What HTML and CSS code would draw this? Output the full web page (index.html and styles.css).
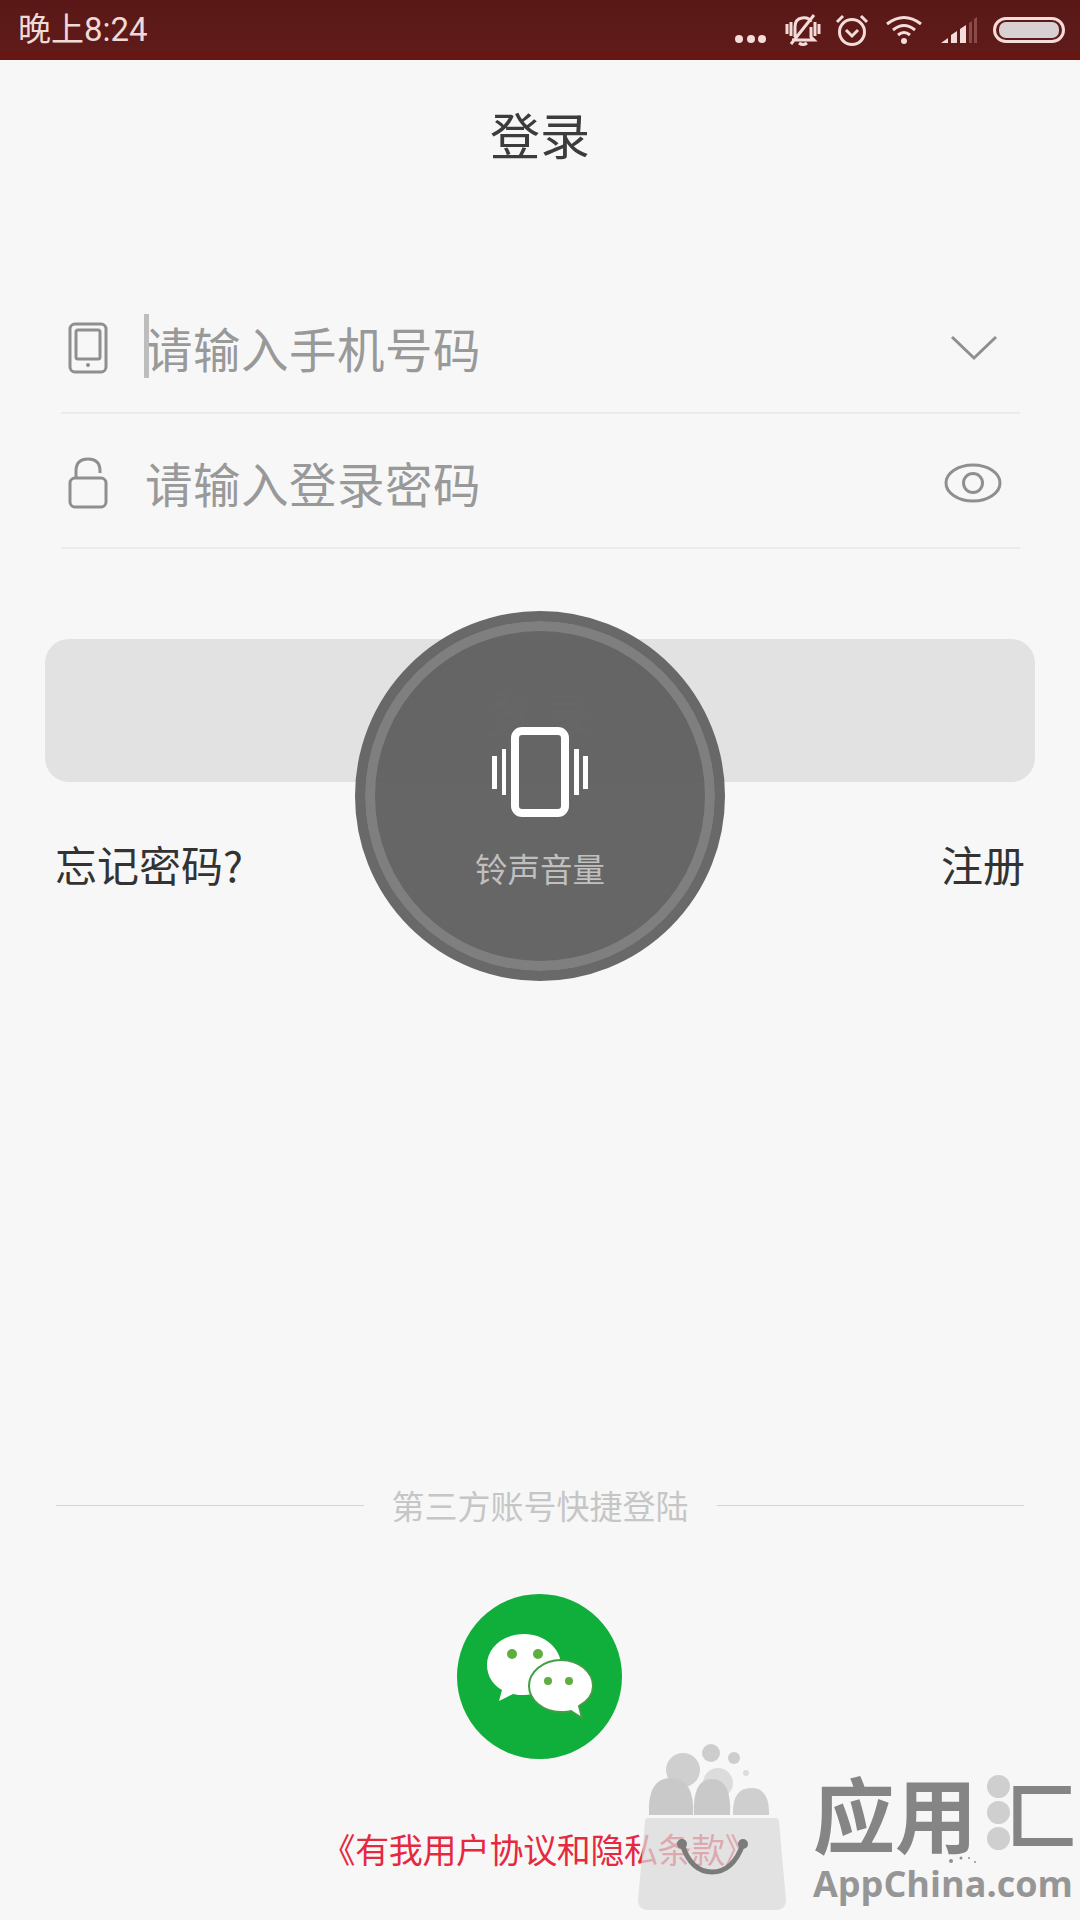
FILE: index.html
```html
<!DOCTYPE html>
<html lang="zh-CN">
<head>
    <meta charset="UTF-8">
    <meta name="viewport" content="width=device-width, initial-scale=1.0">
    <title>登录</title>
    <link rel="stylesheet" href="styles.css">
</head>
<body>
    <div class="page">
        <div class="status-bar">
            <span class="status-time">晚上8:24</span>
            <div class="status-icons">
                <svg class="ic-dots" width="34" height="10" viewBox="0 0 34 10"><circle cx="5" cy="5" r="4"/><circle cx="17" cy="5" r="4"/><circle cx="28" cy="5" r="4"/></svg>
                <svg class="ic-line ic-bell" width="36" height="34" viewBox="0 0 36 34">
                    <path d="M10 24V14q0-8 7-9t9 4M26 14v10l3 3H7M14 30q4 3 8 0M2 11v10M6 9v14M30 9v14M34 11v10M6 31 29 2"/>
                </svg>
                <svg class="ic-line ic-alarm" width="34" height="34" viewBox="0 0 34 34">
                    <circle cx="17" cy="19" r="12.5"/><path d="M11 17l6 6 6-6M2 9l6-6M32 9l-6-6"/>
                </svg>
                <svg class="ic-line ic-wifi" width="38" height="32" viewBox="0 0 38 32">
                    <path d="M2 10q17-13 34 0M8 16q11-9 22 0M13 21q6-5 12 0"/><circle class="fill" cx="19" cy="27" r="3"/>
                </svg>
                <svg class="ic-signal" width="38" height="28" viewBox="0 0 38 28">
                    <path d="M1 27 8 22V27ZM11 27V19L17 15V27ZM20 27V13L26 9V27Z"/><path class="off" d="M29 27V7L32 5V27ZM34 27V3L37 1V27Z"/>
                </svg>
                <svg class="ic-battery" width="72" height="26" viewBox="0 0 72 26">
                    <rect x="1.5" y="1.5" width="69" height="23" rx="11.5" class="shell"/>
                    <rect x="6" y="5" width="60" height="16" rx="7"/>
                </svg>
            </div>
        </div>

        <h1 class="title">登录</h1>

        <form class="login-form">
            <div class="form-row">
                <svg class="row-icon" width="40" height="52" viewBox="0 0 40 52">
                    <rect x="2" y="2" width="36" height="48" rx="5"/><rect x="8" y="8" width="24" height="29" rx="2"/><circle class="fill" cx="20" cy="43" r="2"/>
                </svg>
                <span class="caret"></span>
                <span class="placeholder">请输入手机号码</span>
                <svg class="row-action" width="48" height="26" viewBox="0 0 48 26"><path d="M2 2 24 23 46 2"/></svg>
            </div>
            <div class="form-row">
                <svg class="row-icon" width="40" height="52" viewBox="0 0 40 52">
                    <rect x="2" y="21" width="36" height="29" rx="5"/><path d="M8 21V14Q8 2 20 2T32 14V16"/>
                </svg>
                <span class="placeholder">请输入登录密码</span>
                <svg class="row-action" width="58" height="40" viewBox="0 0 58 40"><ellipse cx="29" cy="20" rx="27" ry="18"/><circle cx="29" cy="20" r="9.5"/></svg>
            </div>
        </form>

        <button class="login-btn" type="button">登 录</button>

        <div class="links">
            <span>忘记密码?</span>
            <span>注册</span>
        </div>

        <div class="third-party">
            <div class="divider"><span>第三方账号快捷登陆</span></div>
            <div class="wechat">
                <svg width="165" height="165" viewBox="0 0 165 165">
                    <circle cx="82.5" cy="82.5" r="82.5" fill="#10ae3a"/>
                    <path fill="#fff" d="M67 40C46 40 30 54 30 71c0 11 6 20 15 25l-3 11 14-7c4 1 7 1 11 1 21 0 37-14 37-30S88 40 67 40Z"/>
                    <circle fill="#5fae3f" cx="55" cy="60" r="5"/><circle fill="#5fae3f" cx="81" cy="60" r="5"/>
                    <path fill="#fff" stroke="#3f9f42" stroke-width="2" d="M104 66c-18 0-32 12-32 26s14 26 32 26c3 0 7 0 10-1l11 7-3-12c9-5 14-12 14-20 0-14-14-26-32-26Z"/>
                    <circle fill="#5fae3f" cx="91" cy="87" r="4"/><circle fill="#5fae3f" cx="112" cy="87" r="4"/>
                </svg>
            </div>
            <a class="agreement">《有我用户协议和隐私条款》</a>
        </div>

        <div class="volume-toast">
            <svg class="vibrate" width="96" height="90" viewBox="0 0 96 90">
                <rect x="23" y="4" width="50" height="82" rx="7"/>
                <path class="bar" d="M0 29H5V62H0ZM10 22H14V68H10ZM82 22H87V68H82ZM91 29H96V62H91Z"/>
            </svg>
            <span class="toast-label">铃声音量</span>
        </div>

        <div class="watermark">
            <svg class="wm-bag" width="150" height="170" viewBox="0 0 150 170">
                <circle class="c3" cx="74" cy="11" r="9"/><circle class="c3" cx="97" cy="16" r="6"/><circle class="c4" cx="109" cy="31" r="3"/>
                <circle class="c2" cx="46" cy="28" r="17"/><circle class="c4" cx="81" cy="41" r="15"/>
                <path class="c1" d="M12 73Q10 36 34 36T56 73Z"/>
                <path class="c1" d="M57 73Q55 37 75 37T93 73Z"/>
                <path class="c2" d="M96 73Q95 46 114 46T132 73Z"/>
                <path class="bag" d="M11 76H138Q142 76 142 80L149 158Q149 168 138 168H12Q1 168 1 158L8 80Q8 76 11 76Z"/>
                <path class="handle" d="M45 102Q54 130 75 130T106 102"/>
                <circle class="knob" cx="45" cy="102" r="5"/><circle class="knob" cx="106" cy="102" r="5"/>
            </svg>
            <div class="wm-brand">
                <div class="wm-name">
                    <span class="wm-text">应用</span>
                    <span class="wm-dots"><i></i><i></i><i></i></span>
                    <span class="wm-last">匚</span>
                </div>
                <div class="wm-site">
                    AppChina.com
                    <svg class="wm-sparks" width="30" height="10" viewBox="0 0 30 10"><circle cx="3" cy="7" r="2"/><circle cx="13" cy="4" r="1.5"/><circle cx="21" cy="4" r="1"/><circle cx="27" cy="8" r="1"/></svg>
                </div>
            </div>
        </div>
    </div>
</body>
</html>
```

FILE: styles.css
```css
*{
    margin : 0;
    padding : 0;
    box-sizing: border-box;
}
body{
    font-family: "Noto Sans CJK SC", "Noto Sans", sans-serif;
    background-color: #f7f7f7;
}
svg{
    display: block;
}
.page{
    position: relative;
    width: 1080px;
    height: 1920px;
    display: flex;
    flex-direction: column;
    overflow: hidden;
    background-color: #f7f7f7;
}

/* status bar */
.status-bar{
    height: 60px;
    flex: none;
    display: flex;
    justify-content: space-between;
    align-items: center;
    padding: 0 15px 0 18px;
    background: linear-gradient(#591817, #5f1b19 85%, #671611 87%);
}
.status-time{
    font-family: "Roboto", "Noto Sans CJK SC", sans-serif;
    font-size: 33px;
    line-height: 60px;
    color: #efdad7;
}
.status-icons{
    display: flex;
    align-items: center;
}
.ic-dots{
    fill: #f3dcd9;
    margin-top: 18px;
}
.ic-line{
    fill: none;
    stroke: #f3dcd9;
    stroke-width: 3;
}
.ic-line .fill{
    fill: #f3dcd9;
    stroke: none;
}
.ic-bell{
    margin-left: 17px;
}
.ic-alarm{
    margin-left: 14px;
}
.ic-wifi{
    margin-left: 16px;
}
.ic-signal{
    fill: #f3dcd9;
    margin-left: 17px;
}
.ic-signal .off{
    fill: #8a4a48;
}
.ic-battery{
    fill: #d8d0d1;
    margin-left: 15px;
}
.ic-battery .shell{
    fill: none;
    stroke: #f3dcd9;
    stroke-width: 3;
}

.title{
    flex: none;
    height: 148px;
    line-height: 146px;
    text-align: center;
    font-size: 50px;
    font-weight: 400;
    color: #3c3c3c;
}

/* form */
.login-form{
    flex: none;
    margin: 71px 60px 0 61px;
}
.form-row{
    position: relative;
    height: 135px;
    display: flex;
    align-items: center;
    padding: 4px 0 0 7px;
    border-bottom: 2px solid #ebebeb;
}
.row-icon{
    flex: none;
    fill: none;
    stroke: #8f8f8f;
    stroke-width: 3;
}
.row-icon .fill{
    fill: #8f8f8f;
    stroke: none;
}
.caret{
    position: absolute;
    left: 83px;
    top: 35px;
    width: 5px;
    height: 64px;
    background-color: #bdbdbd;
}
.placeholder{
    flex: 1;
    margin-left: 37px;
    font-size: 47.5px;
    line-height: 60px;
    letter-spacing: .5px;
    color: #999;
}
.row-action{
    flex: none;
    fill: none;
    stroke: #8f8f8f;
    stroke-width: 3;
    margin-right: 18px;
}
.form-row:first-child .row-action{
    margin-right: 22px;
}

.login-btn{
    flex: none;
    margin: 90px 45px 0;
    height: 143px;
    border: 0;
    border-radius: 24px;
    background-color: #e2e2e2;
    font-family: inherit;
    font-size: 48px;
    color: #fff;
}
.links{
    flex: none;
    display: flex;
    justify-content: space-between;
    margin-top: 52px;
    padding: 0 55px;
    font-size: 42px;
    line-height: 60px;
    color: #333;
}

/* third party login */
.third-party{
    margin-top: auto;
    display: flex;
    flex-direction: column;
    align-items: center;
    padding-bottom: 46px;
}
.divider{
    width: 968px;
    display: flex;
    align-items: center;
    gap: 28px;
    font-size: 33px;
    line-height: 50px;
    color: #c6c6c6;
}
.divider::before,
.divider::after{
    content: "";
    flex: 1;
    height: 1px;
    background-color: #d4d4d4;
}
.wechat{
    margin-top: 64px;
    margin-right: 2px;
}
.agreement{
    margin-top: 65px;
    font-size: 34px;
    line-height: 50px;
    letter-spacing: -.4px;
    color: #e5293f;
}

/* volume toast over the page */
.volume-toast{
    position: absolute;
    left: 355px;
    top: 611px;
    width: 370px;
    height: 370px;
    display: flex;
    flex-direction: column;
    align-items: center;
    padding-top: 106px;
    border-radius: 50%;
    border: 10px solid #676767;
    background-color: #646464;
    box-shadow: inset 0 0 0 10px #7e7e7e;
    opacity: .985;
}
.vibrate rect{
    fill: none;
    stroke: #fff;
    stroke-width: 8;
}
.vibrate .bar{
    fill: #fff;
}
.toast-label{
    margin-top: 26px;
    font-size: 32.5px;
    line-height: 50px;
    color: #bfbfbf;
}

/* watermark */
.watermark{
    position: absolute;
    left: 637px;
    top: 1742px;
    width: 443px;
    display: flex;
    align-items: flex-start;
    gap: 26px;
}
.wm-bag{
    flex: none;
}
.wm-bag .c1{
    fill: #c9c9c9;
}
.wm-bag .c2{
    fill: #cfcfcf;
}
.wm-bag .c3{
    fill: #cdcdcd;
}
.wm-bag .c4{
    fill: #dcdcdc;
}
.wm-bag .bag{
    fill: #d9d9d9;
    opacity: .72;
}
.wm-bag .handle{
    fill: none;
    stroke: #7b7b7b;
    stroke-width: 5;
}
.wm-bag .knob{
    fill: #7b7b7b;
}
.wm-brand{
    flex: none;
    width: 262px;
    margin-top: 28px;
}
.wm-name{
    display: flex;
    align-items: center;
    height: 84px;
    font-size: 82px;
    line-height: 84px;
    font-weight: 700;
    white-space: nowrap;
    color: #858585;
}
.wm-text{
    flex: none;
}
.wm-dots{
    flex: none;
    display: flex;
    flex-direction: column;
    gap: 3px;
    margin-left: 10px;
}
.wm-dots i{
    display: block;
    width: 23px;
    height: 23px;
    border-radius: 50%;
    background-color: #cfcfcf;
}
.wm-last{
    flex: none;
    margin-left: -4px;
    font-size: 72px;
}
.wm-site{
    position: relative;
    margin-top: 10px;
    font-family: "Open Sans", sans-serif;
    font-size: 36px;
    line-height: 40px;
    font-weight: 700;
    white-space: nowrap;
    color: #969696;
}
.wm-sparks{
    position: absolute;
    left: 135px;
    top: -10px;
    fill: #8f8f8f;
}
```
